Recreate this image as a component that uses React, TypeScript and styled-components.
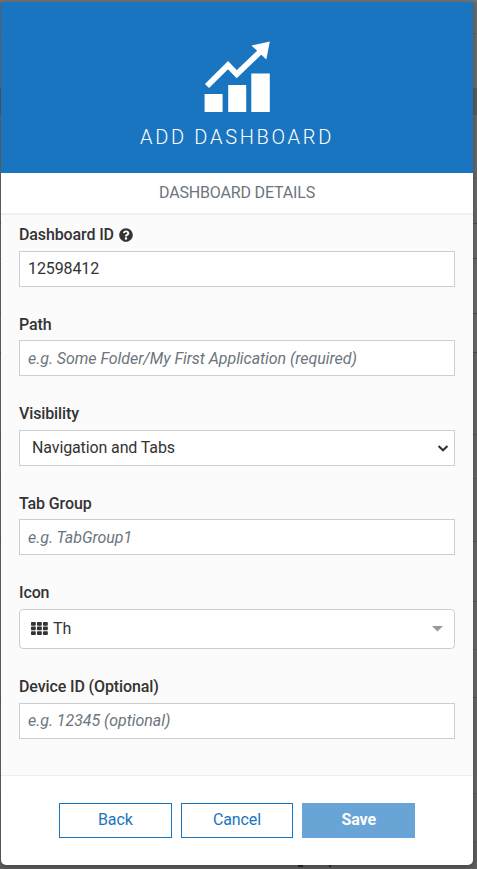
import React from "react";
import styled, { createGlobalStyle } from "styled-components";
import { FaQuestionCircle } from "react-icons/fa";

const GlobalStyle = createGlobalStyle`
  *, *::before, *::after { box-sizing: border-box; }
  html, body, #root { height: 100%; }
  body {
    margin: 0;
    overflow: hidden;
    font-family: Roboto, "Liberation Sans", sans-serif;
    font-size: 16px;
    color: #333;
  }
`;

const Backdrop = styled.div`
  position: relative;
  height: 869px;
  width: 477px;
  padding: 2px 4px 4px 1px;
  background-color: #656565;
  background-image: linear-gradient(
    #737373 0 2px, #6c6c6c 2px 33px, #636363 33px 34px, #6c6c6c 34px 88px,
    #5b5b5b 88px 115px, #686868 115px 178px, #5e5e5e 178px 179px, #686868 179px 223px,
    #4c4c4c 223px 224px, #696969 224px 258px, #4c4c4c 258px 259px, #696969 259px 313px,
    #4c4c4c 313px 314px, #696969 314px 352px, #4c4c4c 352px 353px, #666666 353px 434px,
    #585858 434px 435px, #666666 435px 478px, #5c5c5c 478px 479px, #666666 479px 541px,
    #565656 541px 542px, #686868 542px 601px, #585858 601px 602px, #686868 602px 649px,
    #5c5c5c 649px 650px, #686868 650px 697px, #565656 697px 698px, #666666 698px 793px,
    #5c5c5c 793px 794px, #646464 794px 841px, #5c5c5c 841px 842px, #606060 842px
  );
`;

const Descender = styled.i<{ $x: number; $w: number }>`
  position: absolute;
  left: ${(p) => p.$x}px;
  top: 865px;
  width: ${(p) => p.$w}px;
  height: 1.5px;
  background: #222;
`;

const Modal = styled.form`
  display: flex;
  flex-direction: column;
  width: 472px;
  height: 863px;
  overflow: hidden;
  background: #fff;
  border-radius: 0 0 5px 5px;
  box-shadow: 0 2px 6px rgba(0, 0, 0, 0.3);
`;

const Header = styled.header`
  height: 171px;
  flex: none;
  padding-top: 38px;
  display: flex;
  flex-direction: column;
  align-items: center;
  background: #1a75c0;
  color: #fff;
`;

const Title = styled.h1`
  margin: 13px 0 0;
  font-size: 20px;
  line-height: 24px;
  font-weight: 300;
  letter-spacing: 2.7px;
`;

const SectionTitle = styled.h2`
  flex: none;
  height: 42px;
  margin: 0;
  font-size: 16px;
  font-weight: 400;
  line-height: 40px;
  letter-spacing: -0.17px;
  text-align: center;
  color: #6c757d;
  border-bottom: 2px solid #f0f0f0;
`;

const Fields = styled.div`
  flex: none;
  height: 560px;
  padding: 8px 18px 0;
  background: #fbfbfb;
`;

const Label = styled.label`
  display: flex;
  align-items: center;
  gap: 5px;
  height: 28px;
  padding-bottom: 4px;
  font-weight: 500;
  line-height: 24px;
  letter-spacing: -0.12px;
`;

const Field = styled.div`
  margin-bottom: 26px;
  &:nth-child(odd) {
    margin-bottom: 25px;
  }
  &:nth-last-child(2) {
    margin-bottom: 26px;
  }
  &:nth-child(2) ${Label}, &:nth-child(4) ${Label} {
    padding-bottom: 2px;
  }
`;

const Input = styled.input<{ $raised?: boolean }>`
  display: block;
  width: 100%;
  height: 36px;
  padding: 0 8px ${(p) => (p.$raised ? 1 : 0)}px;
  border: 1px solid #cbcfd3;
  border-radius: 0;
  background: #fff;
  font: inherit;
  letter-spacing: -0.1px;
  color: #333;
  outline: none;
  &::placeholder {
    color: #6c757d;
    font-style: italic;
    letter-spacing: -0.05px;
    opacity: 1;
  }
`;

const SelectBox = styled.div<{ $rounded?: boolean }>`
  display: flex;
  align-items: center;
  height: ${(p) => (p.$rounded ? 40 : 36)}px;
  padding: ${(p) => (p.$rounded ? "0 11px 1px" : "0 5px 1px 12px")};
  border: 1px solid #cccfd1;
  border-radius: ${(p) => (p.$rounded ? 4 : 0)}px;
  background: #fff;
`;

const Value = styled.span`
  flex: 1;
  letter-spacing: -0.12px;
`;

const ThIcon = styled.svg`
  margin-right: 5px;
`;

const Footer = styled.footer`
  flex: 1;
  display: flex;
  justify-content: center;
  align-items: flex-start;
  gap: 9px;
  padding-top: 27px;
  border-top: 1px solid #eee;
`;

const Button = styled.button<{ $primary?: boolean }>`
  width: 112.7px;
  height: 35px;
  padding: 0 0 2px;
  border: 1px solid ${(p) => (p.$primary ? "#69a4d6" : "#1a75bf")};
  background: ${(p) => (p.$primary ? "#69a4d6" : "#fff")};
  color: ${(p) => (p.$primary ? "#fff" : "#1a75bf")};
  font: inherit;
  font-weight: ${(p) => (p.$primary ? 700 : 400)};
  letter-spacing: -0.1px;
`;

const GrowthChart = () => (
  <svg width="66" height="72" viewBox="0 0 66 72" fill="#fff">
    <path d="M0.6 54h18v18h-18zM24.2 45h18v27h-18zM47.3 33.5h18.5V72H47.3z" />
    <path d="M3 46 24 25.2 32.8 34.2 56 12" fill="none" stroke="#fff" strokeWidth="5.8" />
    <path d="M65.8 1.5 47.5 5.5 62.3 19.5z" />
  </svg>
);

export default function App() {
  return (
    <>
      <GlobalStyle />
      <Backdrop>
        <Modal>
          <Header>
            <GrowthChart />
            <Title>ADD DASHBOARD</Title>
          </Header>
          <SectionTitle>DASHBOARD DETAILS</SectionTitle>
          <Fields>
            <Field>
              <Label htmlFor="dashboard">
                Dashboard ID <FaQuestionCircle size={14} />
              </Label>
              <Input id="dashboard" $raised defaultValue="12598412" />
            </Field>
            <Field>
              <Label htmlFor="path">Path</Label>
              <Input id="path" placeholder="e.g. Some Folder/My First Application (required)" />
            </Field>
            <Field>
              <Label>Visibility</Label>
              <SelectBox>
                <Value>Navigation and Tabs</Value>
                <svg width="12" height="8" viewBox="0 0 12 8" fill="none" stroke="#333" strokeWidth="2.1">
                  <path d="M1.5 2 6 6.2 10.5 2" />
                </svg>
              </SelectBox>
            </Field>
            <Field>
              <Label htmlFor="group">Tab Group</Label>
              <Input id="group" placeholder="e.g. TabGroup1" />
            </Field>
            <Field>
              <Label>Icon</Label>
              <SelectBox $rounded>
                <ThIcon width="17" height="13" viewBox="0 0 17 13" fill="#333">
                  {[0, 6, 12].map((x) =>
                    [0, 4.6, 9.2].map((y) => (
                      <rect key={`${x}-${y}`} x={x} y={y} width="4.8" height="3.7" rx="0.7" />
                    ))
                  )}
                </ThIcon>
                <Value>Th</Value>
                <svg width="11" height="6" viewBox="0 0 11 6" fill="#999">
                  <path d="M0 0h11L5.5 5.5z" />
                </svg>
              </SelectBox>
            </Field>
            <Field>
              <Label htmlFor="device">Device ID (Optional)</Label>
              <Input id="device" $raised placeholder="e.g. 12345 (optional)" />
            </Field>
          </Fields>
          <Footer>
            <Button type="button">Back</Button>
            <Button type="button">Cancel</Button>
            <Button type="button" $primary>Save</Button>
          </Footer>
        </Modal>
        <Descender $x={298} $w={5} />
        <Descender $x={329} $w={2} />
      </Backdrop>
    </>
  );
}
